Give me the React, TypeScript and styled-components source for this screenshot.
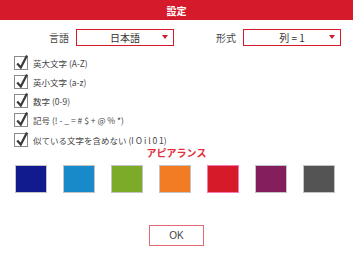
import React, { useState } from 'react'
import styled, { createGlobalStyle } from 'styled-components'

const GlobalStyle = createGlobalStyle`
  html, body {
    margin: 0;
    padding: 0;
    background: #ffffff;
  }
  body {
    font-family: "Noto Sans CJK JP", "Noto Sans", "Liberation Sans", sans-serif;
    color: #444444;
  }
`

const Panel = styled.div`
  width: 353px;
  height: 253px;
  background: #ffffff;
  display: flex;
  flex-direction: column;
  box-sizing: border-box;
`

const Header = styled.div`
  height: 20px;
  background: #d51a2b;
  color: #ffffff;
  font-size: 10px;
  font-weight: bold;
  display: flex;
  align-items: center;
  justify-content: center;
`

const SelectRow = styled.div`
  display: flex;
  margin-top: 9px;
  height: 17px;
`

const SelectGroup = styled.div<{ width: number }>`
  width: ${({ width }) => width}px;
  display: flex;
  justify-content: flex-end;
  align-items: center;
  gap: 7px;
`

const Label = styled.span`
  font-size: 10px;
  line-height: 12px;
  color: #444444;
`

const SelectBox = styled.div`
  position: relative;
  width: 98px;
  height: 17px;
  box-sizing: border-box;
  border: 1.5px solid #d51a2b;
  display: flex;
  align-items: center;
  justify-content: center;
  font-size: 10px;
  line-height: 12px;
  color: #333333;
`

const Arrow = styled.span`
  position: absolute;
  right: 5px;
  top: 5px;
  width: 0;
  height: 0;
  border-left: 3px solid transparent;
  border-right: 3px solid transparent;
  border-top: 4px solid #d51a2b;
`

const CheckList = styled.div`
  display: flex;
  flex-direction: column;
  padding-left: 14px;
  margin-top: 7px;
`

const CheckRow = styled.label`
  height: 19.25px;
  display: flex;
  align-items: center;
  gap: 5px;
  font-size: 8.5px;
  line-height: 10px;
  color: #444444;
`

const Box = styled.span`
  position: relative;
  width: 12px;
  height: 12px;
  border: 1px solid #8a8a8a;
  background: #ffffff;
  flex-shrink: 0;

  svg {
    position: absolute;
    left: 0px;
    top: -3px;
  }
`

const Title = styled.div`
  text-align: center;
  font-size: 10px;
  font-weight: bold;
  color: #e2303c;
  margin-top: -1px;
  line-height: 10px;
`

const Swatches = styled.div`
  display: flex;
  gap: 16px;
  padding-left: 15px;
  margin-top: 7px;
`

const Swatch = styled.div<{ color: string; selected: boolean }>`
  width: 32px;
  height: 28px;
  box-sizing: border-box;
  background: ${({ color }) => color};
  border: 1.5px solid ${({ selected }) => (selected ? '#f57ab0' : '#c4c4c8')};
`

const Footer = styled.div`
  flex: 1;
  display: flex;
  justify-content: center;
  align-items: flex-start;
  padding-top: 32px;
`

const OkButton = styled.button`
  width: 55px;
  height: 21px;
  box-sizing: border-box;
  background: #ffffff;
  border: 1.5px solid #e06a76;
  font-family: "Liberation Sans", Arial, sans-serif;
  font-size: 10px;
  color: #444444;
  padding: 0;
`

const options = [
  '英大文字 (A-Z)',
  '英小文字 (a-z)',
  '数字 (0-9)',
  '記号 (! - _ = # $ + @ % *)',
  '似ている文字を含めない (I O i l 0 1)',
]

const colors = ['#121b8e', '#1889c9', '#7cab29', '#f17c23', '#d61a29', '#841e5d', '#545454']

const Check = () => (
  <svg width="14" height="16" viewBox="0 0 14 16">
    <path d="M2.2 9.5 L5.8 13.6 L12 1.5" fill="none" stroke="#3a3a3a" strokeWidth="2.2" strokeLinejoin="miter" />
  </svg>
)

const App: React.FC = () => {
  const [selected, setSelected] = useState(4)
  return (
    <Panel>
      <GlobalStyle />
      <Header>設定</Header>
      <SelectRow>
        <SelectGroup width={174}>
          <Label>言語</Label>
          <SelectBox>
            日本語
            <Arrow />
          </SelectBox>
        </SelectGroup>
        <SelectGroup width={167}>
          <Label>形式</Label>
          <SelectBox>
            列 = 1
            <Arrow />
          </SelectBox>
        </SelectGroup>
      </SelectRow>
      <CheckList>
        {options.map(o => (
          <CheckRow key={o}>
            <Box>
              <Check />
            </Box>
            {o}
          </CheckRow>
        ))}
      </CheckList>
      <Title>アピアランス</Title>
      <Swatches>
        {colors.map((c, i) => (
          <Swatch key={c} color={c} selected={i === selected} onClick={() => setSelected(i)} />
        ))}
      </Swatches>
      <Footer>
        <OkButton>OK</OkButton>
      </Footer>
    </Panel>
  )
}

export default App
